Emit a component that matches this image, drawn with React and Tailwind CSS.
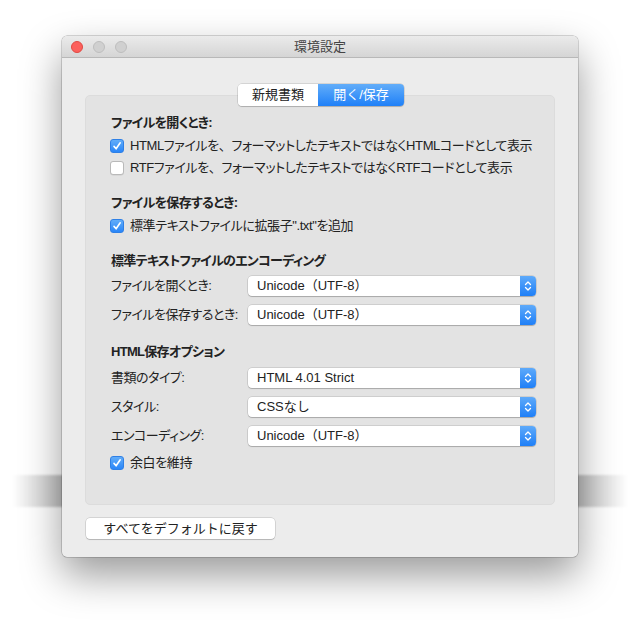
import React from 'react';

const FONT = "font-['Liberation_Sans','Noto_Sans_CJK_JP',sans-serif]";
const PALT = "[font-feature-settings:'palt']";

function Check({ checked }) {
  if (checked) {
    return (
      <span className="w-[14px] h-[14px] rounded-[3px] bg-[linear-gradient(#62adf9,#2a86f8)] border border-[#2f80e6] flex items-center justify-center shrink-0">
        <svg width="10" height="10" viewBox="0 0 10 10">
          <path d="M2 5.4 L4.1 7.8 L8.2 1.8" fill="none" stroke="white" strokeWidth="1.6" strokeLinecap="round" strokeLinejoin="round" />
        </svg>
      </span>
    );
  }
  return <span className="w-[14px] h-[14px] rounded-[3px] bg-white border border-[#b9b9b9] shadow-[0_0.5px_0.5px_rgba(0,0,0,0.1)] shrink-0" />;
}

function CheckRow({ checked, children }) {
  return (
    <div className="flex items-center gap-[6px] h-[16px] -ml-[1px]">
      <Check checked={checked} />
      <span className={`leading-[16px] whitespace-nowrap tracking-[-0.4px] ${PALT}`}>{children}</span>
    </div>
  );
}

function Heading({ children }) {
  return <div className={`font-bold leading-[16px] h-[16px] tracking-[-0.7px] ${PALT}`}>{children}</div>;
}

// full-width comma without proportional spacing, as in the original
const Comma = () => <span className="[font-feature-settings:normal]">、</span>;

function Popup({ label, value }) {
  return (
    <div className="flex items-center h-[20px]">
      <span className={`w-[137px] shrink-0 leading-[16px] tracking-[-0.5px] ${PALT}`}>{label}</span>
      <div className="flex w-[289px] h-[20px] rounded-[4px] bg-white shadow-[0_0_0_0.5px_rgba(0,0,0,0.18),0_1px_1px_rgba(0,0,0,0.18)]">
        <span className="flex-1 pl-[9px] leading-[20px] whitespace-nowrap">{value}</span>
        <span className="w-[16px] h-[20px] rounded-r-[4px] bg-[linear-gradient(#5eaafa,#1f7ff7)] flex items-center justify-center">
          <svg width="8" height="12" viewBox="0 0 8 12">
            <path d="M1.5 4.5 L4 2 L6.5 4.5 M1.5 7.5 L4 10 L6.5 7.5" fill="none" stroke="white" strokeWidth="1.3" strokeLinecap="round" strokeLinejoin="round" />
          </svg>
        </span>
      </div>
    </div>
  );
}

export default function App() {
  return (
    <div className={`relative w-[640px] h-[640px] bg-white pt-[36px] pl-[62px] text-[13px] text-[#222] ${FONT}`}>
      {/* shadow band behind the window */}
      <div className="absolute left-[12px] right-[12px] top-[475px] h-[32px] bg-[linear-gradient(to_right,rgba(0,0,0,0),rgba(0,0,0,0.3)_10%,rgba(0,0,0,0.45)_50%,rgba(0,0,0,0.3)_90%,rgba(0,0,0,0))] blur-[1px]" />

      <div className="relative w-[516px] h-[521px] rounded-[5px] bg-[#ececec] shadow-[0_0_0_0.5px_rgba(0,0,0,0.3),0_18px_40px_rgba(0,0,0,0.4)] overflow-hidden flex flex-col">
        {/* title bar */}
        <div className="relative h-[22px] shrink-0 bg-[linear-gradient(#ebebeb,#d5d5d5)] border-b border-[#b8b8b8] flex items-center justify-center">
          <div className="absolute left-[9px] top-[5px] flex gap-[10px]">
            <span className="w-[12px] h-[12px] rounded-full bg-[#fc605c] border border-[#de4a44]" />
            <span className="w-[12px] h-[12px] rounded-full bg-[#d0d0d0] border border-[#bdbdbd]" />
            <span className="w-[12px] h-[12px] rounded-full bg-[#d0d0d0] border border-[#bdbdbd]" />
          </div>
          <span className="text-[#444] leading-[16px]">環境設定</span>
        </div>

        {/* body */}
        <div className="flex-1 px-[23px] pt-[26px]">
          <div className="relative z-10 flex justify-center pl-[2px]">
            <div className="flex h-[22px] rounded-[4px] shadow-[0_0_0_0.5px_rgba(0,0,0,0.2),0_1px_1px_rgba(0,0,0,0.15)]">
              <span className="w-[80px] rounded-l-[4px] bg-white flex items-center justify-center leading-[16px]">新規書類</span>
              <span className="w-[86px] rounded-r-[4px] bg-[linear-gradient(#62adf9,#1f80f8)] text-white flex items-center justify-center leading-[16px]">開く/保存</span>
            </div>
          </div>

          <div className="-mt-[11px] h-[410px] rounded-[5px] bg-[#e3e3e3] border border-[#dcdcdc] pl-[25px] pr-[18px] pt-[19px] flex flex-col">
            <Heading>ファイルを開くとき:</Heading>
            <div className="mt-[7px] flex flex-col gap-[6px]">
              <CheckRow checked>HTMLファイルを<Comma />フォーマットしたテキストではなくHTMLコードとして表示</CheckRow>
              <CheckRow>RTFファイルを<Comma />フォーマットしたテキストではなくRTFコードとして表示</CheckRow>
            </div>

            <div className="mt-[19px]"><Heading>ファイルを保存するとき:</Heading></div>
            <div className="mt-[7px]"><CheckRow checked>標準テキストファイルに拡張子".txt"を追加</CheckRow></div>

            <div className="mt-[19px]"><Heading>標準テキストファイルのエンコーディング</Heading></div>
            <div className="mt-[7px] flex flex-col gap-[9px]">
              <Popup label="ファイルを開くとき:" value="Unicode（UTF-8）" />
              <Popup label="ファイルを保存するとき:" value="Unicode（UTF-8）" />
            </div>

            <div className="mt-[19px]"><Heading>HTML保存オプション</Heading></div>
            <div className="mt-[8px] flex flex-col gap-[9px]">
              <Popup label="書類のタイプ:" value="HTML 4.01 Strict" />
              <Popup label="スタイル:" value="CSSなし" />
              <Popup label="エンコーディング:" value="Unicode（UTF-8）" />
            </div>
            <div className="mt-[9px]"><CheckRow checked>余白を維持</CheckRow></div>
          </div>

          <button className="mt-[13px] ml-[1px] w-[189px] h-[21px] rounded-[4px] bg-white shadow-[0_0_0_0.5px_rgba(0,0,0,0.2),0_1px_1px_rgba(0,0,0,0.15)] flex items-center justify-center leading-[16px]">
            すべてをデフォルトに戻す
          </button>
        </div>
      </div>
    </div>
  );
}
